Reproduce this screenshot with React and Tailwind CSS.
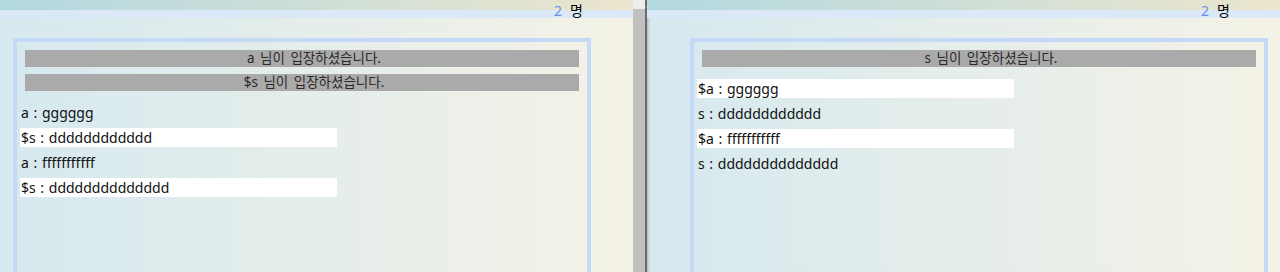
const font = { fontFamily: '"Noto Sans", "Noto Sans CJK KR", sans-serif' };

function SystemMsg({ text }) {
  return (
    <div className="mx-[8px] mb-[7px] h-[17px] bg-[#aaaaaa] pl-[24px] text-center text-[13.5px] leading-[17px] text-[#2a2a2a] [word-spacing:2px]">
      {text}
    </div>
  );
}

function ChatRow({ name, text, mine }) {
  return (
    <div
      className={`ml-[3px] mb-[6px] h-[19px] w-[317px] pl-[1px] text-[14px] leading-[19px] text-[#111] [word-spacing:1px] ${
        mine ? 'bg-white' : ''
      }`}
    >
      {name} : {text}
    </div>
  );
}

function Pane({ count, offset, system, chats, className }) {
  return (
    <div className={`relative h-[272px] overflow-hidden bg-gradient-to-r from-[#d6e9ef] to-[#f4f2e6] ${className}`}>
      <div className="h-[10px] bg-gradient-to-r from-[#b2d8e0] to-[#ebe5cc]" />
      <div className="h-[8px] bg-[#dae8f7]" />
      <div className="absolute right-[50px] top-[2px] text-[14px] leading-[18px]">
        <span className="text-[#6b8fe6]">{count}</span>
        <span className="ml-[8px] text-black">명</span>
      </div>
      <div className={`mt-[20px] h-[260px] w-[578px] border-4 border-[#c3d9f7] ${offset}`}>
        <div className="pt-[8px]">
          {system.map((s) => (
            <SystemMsg key={s} text={s} />
          ))}
        </div>
        <div className="pt-[5px]">
          {chats.map((c, i) => (
            <ChatRow key={i} {...c} />
          ))}
        </div>
      </div>
    </div>
  );
}

export default function App() {
  return (
    <div className="flex h-[272px] w-[1280px] overflow-hidden" style={font}>
      <Pane
        className="w-[633px] shrink-0"
        offset="ml-[13px]"
        count="2"
        system={['a 님이 입장하셨습니다.', '$s 님이 입장하셨습니다.']}
        chats={[
          { name: 'a', text: 'gggggg' },
          { name: '$s', text: 'dddddddddddd', mine: true },
          { name: 'a', text: 'fffffffffff' },
          { name: '$s', text: 'dddddddddddddd', mine: true },
        ]}
      />
      <div className="flex w-[12px] shrink-0 flex-col bg-[#c1c1c1]">
        <div className="h-[9px] bg-[#ededed]" />
      </div>
      <div className="relative w-[2px] shrink-0 bg-[#6a6a6a]">
        <svg className="absolute left-0 top-0" width="6" height="9" viewBox="0 0 6 9">
          <line x1="1" y1="8" x2="5" y2="1" stroke="#e08a2a" strokeWidth="1" />
          <line x1="3" y1="8" x2="5" y2="4" stroke="#3b7fd0" strokeWidth="1" />
        </svg>
      </div>
      <Pane
        className="flex-1 shadow-[inset_3px_0_3px_-2px_rgba(0,0,0,0.25)]"
        offset="ml-[43px]"
        count="2"
        system={['s 님이 입장하셨습니다.']}
        chats={[
          { name: '$a', text: 'gggggg', mine: true },
          { name: 's', text: 'dddddddddddd' },
          { name: '$a', text: 'fffffffffff', mine: true },
          { name: 's', text: 'dddddddddddddd' },
        ]}
      />
    </div>
  );
}
